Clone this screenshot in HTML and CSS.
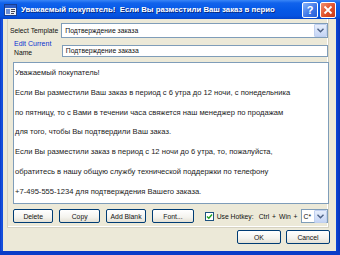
FILE: index.html
```html
<!DOCTYPE html>
<html>
<head>
<meta charset="utf-8">
<link rel="stylesheet" href="styles.css">
</head>
<body>
<div class="window">
  <div class="titlebar">
    <svg class="appicon" width="13" height="12" viewBox="0 0 13 12">
      <rect x="0.5" y="0.5" width="12" height="11" fill="#e8eef8" stroke="#1b3f8f"/>
      <rect x="1" y="1" width="11" height="3" fill="#2a5cc8"/>
      <rect x="2" y="5" width="4" height="5" fill="#6b8ed6"/>
      <rect x="7" y="5" width="4" height="1" fill="#445"/>
      <rect x="7" y="7" width="4" height="1" fill="#445"/>
      <rect x="7" y="9" width="3" height="1" fill="#445"/>
    </svg>
    <span class="title">Уважаемый покупатель!&nbsp; Если Вы разместили Ваш заказ в перио</span>
    <span class="tbtn help">?</span>
    <span class="tbtn close">
      <svg width="14" height="14" viewBox="0 0 14 14"><path d="M3.5 3.5 L10.5 10.5 M10.5 3.5 L3.5 10.5" stroke="#fff" stroke-width="1.8"/></svg>
    </span>
  </div>
  <div class="client">
    <div class="panel">
      <div class="row first">
        <span class="label">Select Template</span>
        <div class="combo">
          <span class="combo-text">Подтверждение заказа</span>
          <span class="arrow"><svg width="7" height="5" viewBox="0 0 7 5"><path d="M0.5 0.8 L3.5 3.8 L6.5 0.8" fill="none" stroke="#4d6185" stroke-width="1.4"/></svg></span>
        </div>
      </div>
      <div class="row second">
        <div class="labels">
          <span class="link">Edit Current</span>
          <span class="label">Name</span>
        </div>
        <div class="input">Подтверждение заказа</div>
      </div>
      <div class="textarea">
        <p>Уважаемый покупатель!</p>
        <p>Если Вы разместили Ваш заказ в период с 6 утра до 12 ночи, с понедельника</p>
        <p>по пятницу, то с Вами в течении часа свяжется наш менеджер по продажам</p>
        <p>для того, чтобы Вы подтвердили Ваш заказ.</p>
        <p>Если Вы разместили заказ в период с 12 ночи до 6 утра, то, пожалуйста,</p>
        <p>обратитесь в нашу общую службу технической поддержки по телефону</p>
        <p>+7-495-555-1234 для подтверждения Вашего заказа.</p>
      </div>
      <div class="row tools">
        <span class="btn">Delete</span>
        <span class="btn">Copy</span>
        <span class="btn">Add Blank</span>
        <span class="btn">Font...</span>
        <span class="check"><svg width="7" height="7" viewBox="0 0 7 7"><path d="M1 3.5 L2.8 5.3 L6 1.5" fill="none" stroke="#21a121" stroke-width="1.4"/></svg></span>
        <span class="label hk">Use Hotkey:</span>
        <span class="label keys">Ctrl + Win +</span>
        <div class="combo small">
          <span class="combo-text">C*</span>
          <span class="arrow"><svg width="7" height="5" viewBox="0 0 7 5"><path d="M0.5 0.8 L3.5 3.8 L6.5 0.8" fill="none" stroke="#4d6185" stroke-width="1.4"/></svg></span>
        </div>
      </div>
    </div>
    <div class="footer">
      <span class="btn wide">OK</span>
      <span class="btn wide">Cancel</span>
    </div>
  </div>
</div>
</body>
</html>
```

FILE: styles.css
```css
html, body {
  margin: 0;
  padding: 0;
  background: #ece9d8;
}
body {
  font-family: "Liberation Sans", Arial, sans-serif;
  font-size: 6.8px;
  color: #111;
}
.window {
  width: 340px;
  height: 255px;
  box-sizing: border-box;
  display: flex;
  flex-direction: column;
  background: linear-gradient(90deg, #0838c8 0, #1a55e0 2px, #0a46d8 3px, transparent 3px, transparent 336px, #0a46d8 336px, #0633b8 340px);
  border-bottom: 4px solid #0a3cc8;
}
.titlebar {
  height: 19px;
  flex: none;
  display: flex;
  align-items: center;
  padding: 0 4px 0 4px;
  background: linear-gradient(#3a86f6 0, #1163ec 3px, #0558e6 10px, #0552e0 16px, #0344cc 19px);
  color: #fff;
}
.appicon {
  flex: none;
  margin-right: 4px;
}
.title {
  flex: 1;
  font-family: "Liberation Sans", Arial, sans-serif;
  font-weight: bold;
  font-size: 7.8px;
  white-space: nowrap;
  overflow: hidden;
  text-shadow: 1px 1px 0 #0a2a80;
}
.tbtn {
  flex: none;
  width: 16px;
  height: 16px;
  box-sizing: border-box;
  border: 1px solid #fff;
  border-radius: 2px;
  margin-left: 2px;
  display: flex;
  align-items: center;
  justify-content: center;
}
.help {
  background: linear-gradient(135deg, #8ab4fa, #3a74e6 60%, #2a5ed6);
  font-weight: bold;
  font-size: 11px;
}
.close {
  background: linear-gradient(135deg, #f09070, #e0502a 55%, #c43a18);
}
.client {
  flex: 1;
  display: flex;
  flex-direction: column;
  margin: 0 4px 0 3px;
  background: #ece9d8;
}
.panel {
  margin: 0 7px 0 4px;
  height: 209px;
  box-sizing: border-box;
  border: 1px solid #d6d2c2;
  border-top: none;
  box-shadow: inset -1px -1px 0 #fff;
  display: flex;
  flex-direction: column;
  padding: 0 0 0 1px;
}
.row {
  display: flex;
  align-items: center;
}
.row.first {
  margin-top: 4px;
  margin-left: 1px;
}
.label {
  white-space: nowrap;
}
.row.first .label {
  width: 52px;
}
.combo {
  width: 270px;
  height: 15px;
  box-sizing: border-box;
  background: #fff;
  border: 1px solid #7f9db9;
  display: flex;
  align-items: center;
  justify-content: space-between;
  padding-left: 3px;
}
.arrow {
  width: 13px;
  height: 13px;
  box-sizing: border-box;
  background: linear-gradient(#e6eefc, #c5d5f5);
  border: 1px solid #c0d0f0;
  border-radius: 1px;
  display: flex;
  align-items: center;
  justify-content: center;
}
.row.second {
  align-items: flex-end;
  margin-top: 1px;
}
.labels {
  display: flex;
  flex-direction: column;
  width: 48px;
  padding-left: 5px;
  line-height: 9px;
}
.link {
  color: #0a32d0;
  font-size: 7px;
  white-space: nowrap;
}
.input {
  width: 267px;
  height: 12px;
  box-sizing: border-box;
  border: 1px solid #7f9db9;
  background: #fff;
  padding-left: 3px;
  line-height: 10px;
}
.textarea {
  margin: 5px 0 0 4px;
  width: 316px;
  height: 142px;
  box-sizing: border-box;
  border: 1px solid #7f9db9;
  background: #fff;
  padding: 0 0 0 1px;
  font-size: 7.6px;
  color: #1a1a1a;
}
.textarea p {
  margin: 0;
  line-height: 19.8px;
  white-space: nowrap;
}
.row.tools {
  margin-top: 5px;
  margin-left: 4px;
}
.btn {
  height: 14px;
  box-sizing: border-box;
  border: 1px solid #003c74;
  border-radius: 2px;
  background: linear-gradient(#ffffff, #f4f3ee 60%, #e3e0d4);
  display: flex;
  align-items: center;
  justify-content: center;
  white-space: nowrap;
}
.tools .btn {
  width: 43px;
  margin-right: 6px;
}
.tools .btn:nth-child(4) {
  width: 44px;
}
.check {
  margin-left: 5px;
  width: 9px;
  height: 9px;
  box-sizing: border-box;
  border: 1px solid #1c5180;
  background: #fff;
  display: flex;
  align-items: center;
  justify-content: center;
}
.check svg {
  flex: none;
}
.hk {
  margin-left: 3px;
}
.keys {
  margin-left: 5px;
  word-spacing: 1px;
}
.combo.small {
  width: 29px;
  height: 14px;
  margin-left: 3px;
  padding-left: 2px;
}
.footer {
  display: flex;
  justify-content: flex-end;
  gap: 5px;
  margin: 2px 6px 0 0;
}
.btn.wide {
  width: 44px;
  height: 14px;
}
```
